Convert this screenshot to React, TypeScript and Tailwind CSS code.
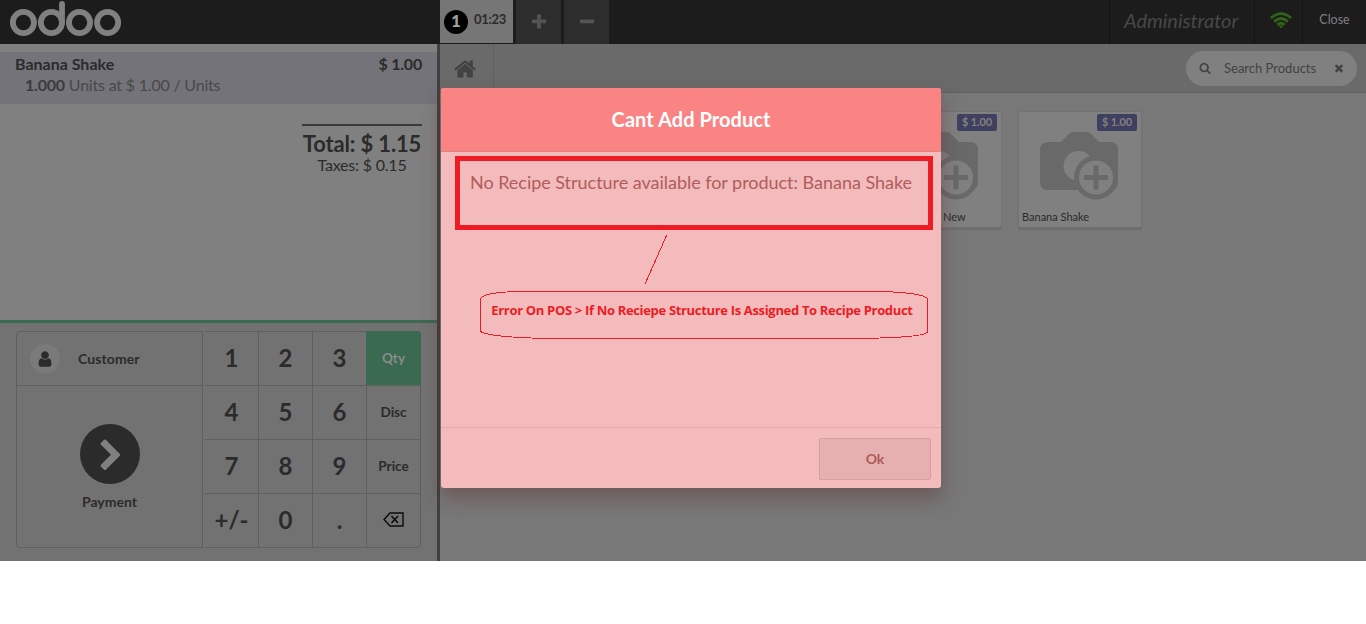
import React from "react";

const P = {
  home: "M1408 992v480q0 26-19 45t-45 19h-384v-384h-256v384h-384q-26 0-45-19t-19-45v-480q0-1 .5-3t.5-3l575-474 575 474q1 2 1 6zm223-69l-62 74q-8 9-21 11h-3q-13 0-21-7l-692-577-692 577q-12 8-24 7-13-2-21-11l-62-74q-8-10-7-23.5t11-21.5l719-599q32-26 76-26t76 26l244 204v-195q0-14 9-23t23-9h192q14 0 23 9t9 23v408l219 182q10 8 11 21.5t-7 23.5z",
  user: "M1536 1399q0 109-62.5 187t-150.5 78h-854q-88 0-150.5-78t-62.5-187q0-85 8.5-160.5t31.5-152 58.5-131 94-89 134.5-34.5q131 128 313 128t313-128q76 0 134.5 34.5t94 89 58.5 131 31.5 152 8.5 160.5zm-256-887q0 159-112.5 271.5t-271.5 112.5-271.5-112.5-112.5-271.5 112.5-271.5 271.5-112.5 271.5 112.5 112.5 271.5z",
  search: "M1216 832q0-185-131.5-316.5t-316.5-131.5-316.5 131.5-131.5 316.5 131.5 316.5 316.5 131.5 316.5-131.5 131.5-316.5zm512 832q0 52-38 90t-90 38q-54 0-90-38l-343-342q-179 124-399 124-143 0-273.5-55.5t-225-150-150-225-55.5-273.5 55.5-273.5 150-225 225-150 273.5-55.5 273.5 55.5 225 150 150 225 55.5 273.5q0 220-124 399l343 343q37 37 37 90z",
  times: "M1490 1322q0 40-28 68l-136 136q-28 28-68 28t-68-28l-294-294-294 294q-28 28-68 28t-68-28l-136-136q-28-28-28-68t28-68l294-294-294-294q-28-28-28-68t28-68l136-136q28-28 68-28t68 28l294 294 294-294q28-28 68-28t68 28l136 136q28 28 28 68t-28 68l-294 294 294 294q28 28 28 68z",
  plus: "M1600 736v192q0 40-28 68t-68 28h-416v416q0 40-28 68t-68 28h-192q-40 0-68-28t-28-68v-416h-416q-40 0-68-28t-28-68v-192q0-40 28-68t68-28h416v-416q0-40 28-68t68-28h192q40 0 68 28t28 68v416h416q40 0 68 28t28 68z",
  minus: "M1600 736v192q0 40-28 68t-68 28h-1216q-40 0-68-28t-28-68v-192q0-40 28-68t68-28h1216q40 0 68 28t28 68z",
  chevron: "M1363 877l-742 742q-19 19-45 19t-45-19l-166-166q-19-19-19-45t19-45l531-531-531-531q-19-19-19-45t19-45l166-166q19-19 45-19t45 19l742 742q19 19 19 45t-19 45z",
};

function Icon({ name, className }: { name: keyof typeof P; className: string }) {
  return (
    <svg viewBox="0 0 1792 1792" fill="currentColor" className={`shrink-0 ${className}`}>
      <path d={P[name]} />
    </svg>
  );
}

function Logo() {
  return (
    <svg width="112" height="38" viewBox="0 0 112 38" fill="none" stroke="#808080" strokeWidth="5.8" strokeLinecap="round">
      <circle cx="13.4" cy="22.5" r="10.6" />
      <circle cx="41.4" cy="22.5" r="10.6" />
      <circle cx="69.5" cy="22.5" r="10.6" />
      <circle cx="97.6" cy="22.5" r="10.6" />
      <path d="M52 22.5V3.8" />
    </svg>
  );
}

function Wifi() {
  return (
    <svg width="22" height="17" viewBox="0 0 22 17" fill="none" stroke="#2f6317" strokeWidth="2.8">
      <path d="M.9 6Q11-2.800 21.1 6" />
      <path d="M4.200 9.600Q11 3.500 17.800 9.600" />
      <path d="M7.400 12.900Q11 9.600 14.600 12.900" />
      <path d="M11 16.500l-2.300-2.200q2.300-1.800 4.600 0z" fill="#2f6317" stroke="none" />
    </svg>
  );
}

function Camera() {
  return (
    <svg className="mr-0.5" width="78" height="68" viewBox="0 0 78 68">
      <path d="M8 10h13l8-8q2-2 5-2h12q3 0 5 2l8 8h11q8 0 8 8v32q0 8-8 8H8q-8 0-8-8V18q0-8 8-8z" fill="#696969" />
      <circle cx="38.500" cy="34" r="15" fill="#808080" />
      <circle cx="56" cy="45.500" r="19.500" fill="#808080" />
      <circle cx="56" cy="45.500" r="19.500" fill="none" stroke="#696969" strokeWidth="5" />
      <path d="M56 33.500v24M44 45.500h24" stroke="#696969" strokeWidth="5" />
    </svg>
  );
}

function Product({ name, indent }: { name: string; indent: string }) {
  return (
    <div className="relative flex h-[117px] w-[124px] flex-col items-center rounded-xs border border-[#737373] bg-[#808080] pt-[20px] shadow-[0_2px_1px_#6d6d6d]">
      <Camera />
      <span className={`mt-[10px] w-full text-[11px] leading-[14px] text-[#2b2b2b] ${indent}`}>{name}</span>
      <span className="absolute top-[2px] right-1 h-[17px] w-10 rounded-xs bg-[#3f4060] text-center text-[11px] leading-[16px] font-bold tracking-[-0.1px] text-[#808080]">$ 1.00</span>
    </div>
  );
}

function Backspace() {
  return (
    <svg className="-mt-0.5" width="21" height="15" viewBox="0 0 21 15" fill="none" stroke="#0b0b0b" strokeWidth="1.4">
      <path d="M7 1h13v13H7L1 7.500z" />
      <path d="M8.500 4l6.500 7M15 4l-6.500 7" strokeWidth="1.6" />
    </svg>
  );
}

const keys: React.ReactNode[] = ["1", "2", "3", "Qty", "4", "5", "6", "Disc", "7", "8", "9", "Price", "+/-", "0", ".", <Backspace key="b" />];

function Keypad() {
  return (
    <div className="grid w-[216px] grid-cols-[53px_54px_54px_55px] grid-rows-[54px_54px_54px_55px]">
      {keys.map((k, i) => {
        const mode = i % 4 === 3;
        const edge = mode ? "border-r" : "";
        const side = i % 4 === 0 ? "" : "border-l";
        const corner = i === 3 ? "rounded-tr" : i === 15 ? "rounded-br" : "";
        const tone = i === 3 ? "bg-[#3a6a50] border-[#3a6a50] text-[#8b8b8b]" : "border-[#5f5f5f] text-[#2b2b2b]";
        return (
          <div
            key={i}
            className={`flex items-center justify-center border-t font-bold ${i > 11 ? "border-b" : ""} ${edge} ${side} ${corner} ${tone} ${mode ? "text-[13.500px]" : "pb-0.5 text-[24px]"}`}
          >
            {k}
          </div>
        );
      })}
    </div>
  );
}

function OrderPane() {
  return (
    <div className="flex w-[440px] flex-col border-r-[3px] border-[#404040] bg-[#808080] pt-2">
      <div className="h-[52px] bg-[#747379] px-[15px] text-[16px]">
        <div className="flex justify-between pt-[2px] leading-[20px] font-bold text-[#2b2b2b]">
          <span>Banana Shake</span>
          <span className="tracking-[-0.2px]">$ 1.00</span>
        </div>
        <div className="pl-[10px] leading-[22px] tracking-[-0.2px] text-[#484848]">
          <b className="text-[#3b3b3b]">1.000</b> Units at $ 1.00 / Units
        </div>
      </div>
      <div className="mt-5 mr-[15px] flex w-[120px] flex-col items-center self-end border-t-2 border-[#3a3a3a] pt-[5px] text-[#2b2b2b]">
        <div className="text-[22px] leading-[26px] font-bold tracking-[-0.15px] whitespace-nowrap">Total: $ 1.15</div>
        <div className="-mt-px text-[16px] leading-[17px] tracking-[-0.2px]">Taxes: $ 0.15</div>
      </div>
      <div className="mt-auto flex h-[241px] border-t-[3px] border-[#3a6a50] bg-[#727272] pt-2 pl-4 text-[#2b2b2b]">
        <div className="mr-0.5 flex h-[217px] w-[187px] flex-col rounded-l border border-[#5f5f5f]">
          <div className="flex h-[54px] items-center border-b border-[#5f5f5f] pl-[13px]">
            <div className="flex size-[30px] items-center justify-center rounded-full bg-[#7a7a7a]">
              <Icon name="user" className="size-[18px]" />
            </div>
            <span className="ml-[18px] text-[14px] font-bold tracking-[0.1px]">Customer</span>
          </div>
          <div className="flex flex-col items-center pt-[38px]">
            <div className="flex size-[60px] items-center justify-center rounded-full bg-[#2b2b2b] pt-[3px] pl-[3px] text-[#808080]">
              <Icon name="chevron" className="size-[34px]" />
            </div>
            <span className="mt-2 text-[14px] leading-5 font-bold">Payment</span>
          </div>
        </div>
        <Keypad />
      </div>
    </div>
  );
}

function TopBar() {
  return (
    <header className="flex h-11 bg-[#1c1c1c]">
      <div className="w-[440px] pl-[9.500px]">
        <Logo />
      </div>
      <div className="flex h-[43px] w-[73px] items-center bg-[#767676] pl-1">
        <span className="flex size-6 items-center justify-center rounded-full bg-black pb-px text-[17px] font-black text-[#a0a0a0]">1</span>
        <span className="ml-1.5 pb-[3px] text-[13px] font-bold tracking-[-0.3px] text-[#2b2b2b]">01:23</span>
      </div>
      <div className="ml-[3px] flex w-[45px] items-center justify-center bg-[#2d2d2d] text-[#545454]">
        <Icon name="plus" className="size-[18px]" />
      </div>
      <div className="ml-[3px] flex w-[45px] items-center justify-center bg-[#2d2d2d] text-[#545454]">
        <Icon name="minus" className="size-[18px]" />
      </div>
      <div className="ml-auto w-[145px] border-l border-[#121212] pl-[14px] text-[20px] leading-[41px] text-[#484848] italic">Administrator</div>
      <div className="flex w-[48px] justify-center border-l border-[#121212] pt-3 pl-1">
        <Wifi />
      </div>
      <div className="w-[64px] border-l border-[#121212] text-center text-[12.500px] leading-[39px] text-[#808080]">Close</div>
    </header>
  );
}

function ProductPane() {
  return (
    <div className="flex flex-1 flex-col bg-[#787878]">
      <div className="flex h-[49px] items-center border-b border-[#5f5f5f] bg-[#6a6a6a]">
        <div className="flex h-full w-[54px] items-center justify-center border-r border-[#606060] pt-0.5 pr-0.5 text-[#424242]">
          <Icon name="home" className="size-6" />
        </div>
        <div className="mr-[9px] ml-auto flex h-[35px] w-[171px] items-center rounded-full bg-[#808080] pl-[13px] text-[#424242]">
          <Icon name="search" className="size-3" />
          <span className="ml-[13px] flex-1 pt-px text-[13px]">Search Products</span>
          <Icon name="times" className="mr-[12px] size-3" />
        </div>
      </div>
      <div className="flex gap-4 pt-[18px] pl-[438px]">
        <Product name="New" indent="pl-[64px]" />
        <Product name="Banana Shake" indent="pl-[3px]" />
      </div>
    </div>
  );
}

function ErrorPopup() {
  return (
    <div className="absolute top-[88px] left-[441px] flex h-[400px] w-[500px] flex-col rounded-[3px] bg-[#f3bbbb] shadow-[0_10px_20px_rgba(90,40,40,0.4)]">
      <h1 className="h-16 rounded-t-[3px] border-b border-[#e08080] bg-[#fa8383] text-center text-[20px] leading-[63px] font-bold tracking-[0.05px] text-white">Cant Add Product</h1>
      <p className="mt-1 ml-[14px] h-[74px] w-[478px] border-[5px] border-[#ed1c24] pt-[9px] pl-[10px] text-[18px] leading-[24px] tracking-[-0.03px] whitespace-nowrap text-[#b05d5d]">
        No Recipe Structure available for product: Banana Shake
      </p>
      <svg className="ml-[200px] shrink-0" width="30" height="60" fill="none" stroke="#ed1c24" shapeRendering="crispEdges">
        <path d="M25.500 5.500l-21.500 48.500" />
      </svg>
      <div className="relative ml-[39px] h-[50px] w-[448px] pr-1 text-center text-[13px] leading-[40px] font-bold whitespace-nowrap text-[#ed1c24]">
        <svg className="absolute inset-0" width="448" height="50" fill="none" stroke="#ed1c24" shapeRendering="crispEdges">
          <path d="M.5 8.500Q5 1.500 45.500 1.500H402Q443 3 447.500 8.500V42.500Q440 48 372 48.500H66Q8 47 .5 41.500z" />
        </svg>
        <span className="font-['Open_Sans',sans-serif] tracking-[-0.33px]">Error On POS &gt; If No Reciepe Structure Is Assigned To Recipe Product</span>
      </div>
      <footer className="mt-auto flex h-[61px] justify-end border-t border-[#e0aaaa] pt-[10px] pr-[10px]">
        <button className="h-[42px] w-28 rounded-xs border border-[#d4a0a0] bg-[#e7b0b0] pb-0.5 text-[14px] font-bold text-[#ae5a5a]">Ok</button>
      </footer>
    </div>
  );
}

export default function App() {
  return (
    <div className="relative flex h-[624px] w-[1366px] flex-col overflow-hidden bg-white font-['Lato',sans-serif]">
      <TopBar />
      <main className="flex h-[517px]">
        <OrderPane />
        <ProductPane />
      </main>
      <ErrorPopup />
    </div>
  );
}
